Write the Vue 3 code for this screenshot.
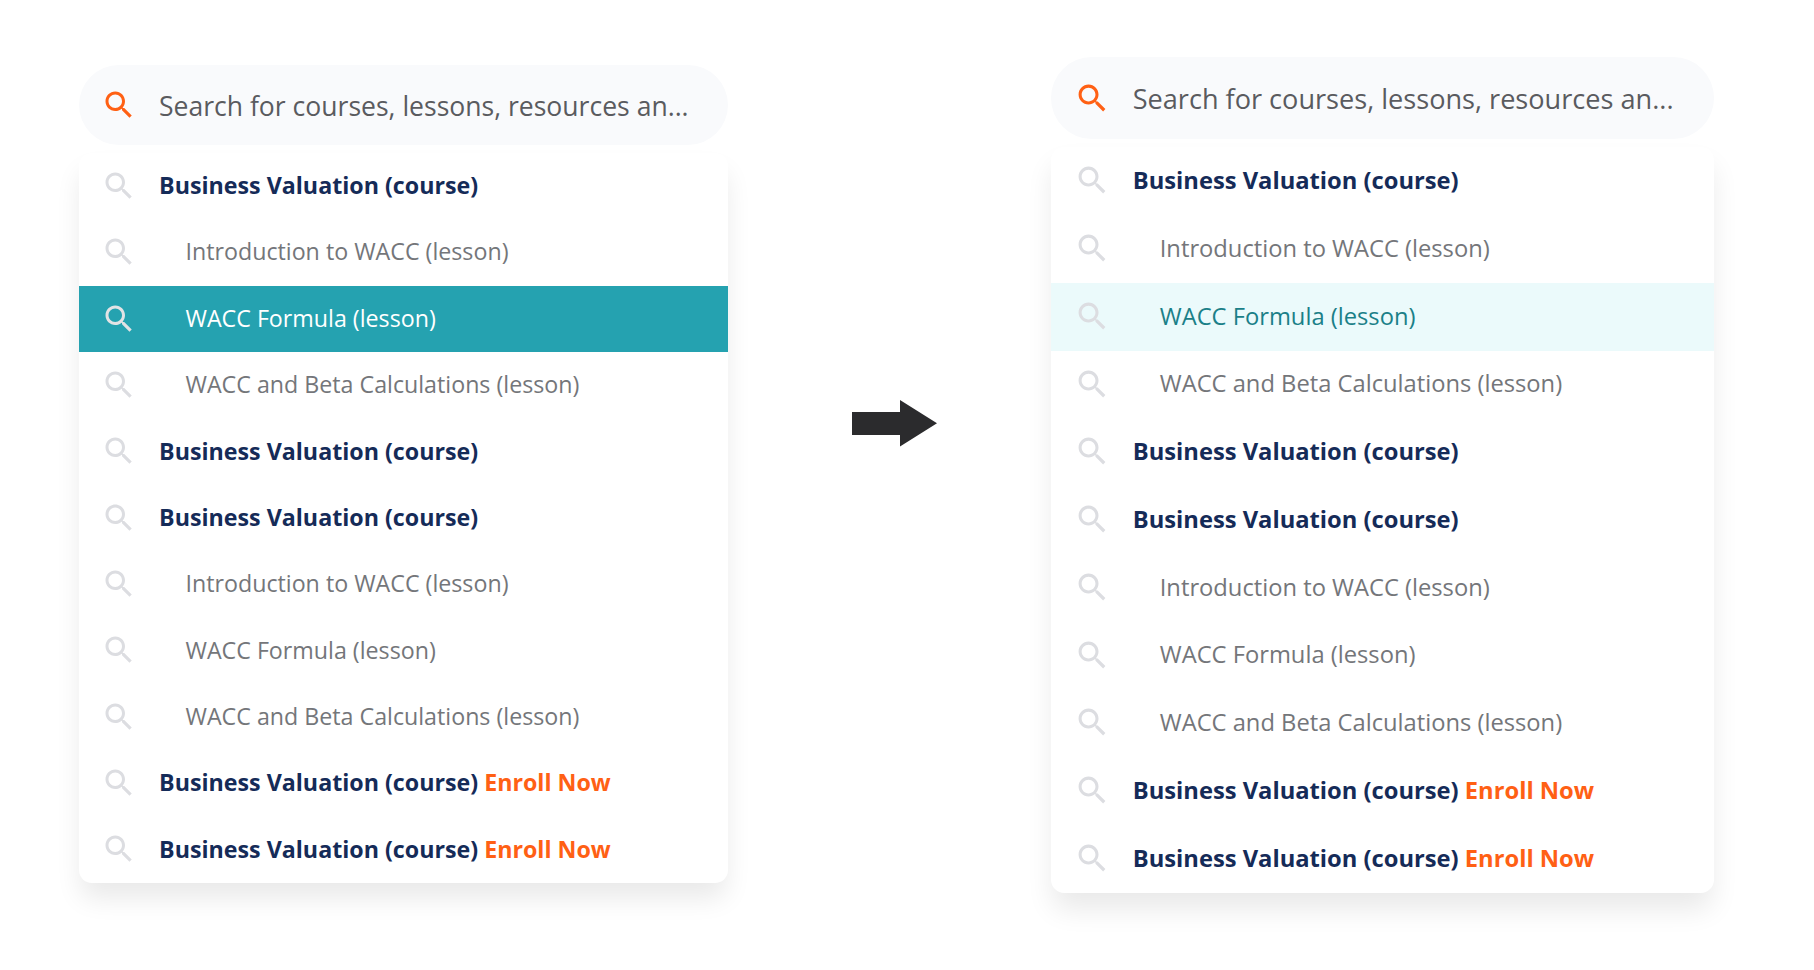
<script setup>
const course = { kind: 'course', text: 'Business Valuation (course)' }
const enroll = { ...course, action: 'Enroll Now' }
const intro = { kind: 'lesson', text: 'Introduction to WACC (lesson)' }
const formula = { kind: 'lesson', text: 'WACC Formula (lesson)' }
const beta = { kind: 'lesson', text: 'WACC and Beta Calculations (lesson)' }

const rows = [
  course, intro, { ...formula, active: true }, beta,
  course, course, intro, formula, beta, enroll, enroll,
]
const variants = ['before', 'after']
const iconPath =
  'M15.5 14h-.79l-.28-.27C15.41 12.59 16 11.11 16 9.5 16 5.91 13.09 3 9.5 3S3 5.91 3 9.5 5.91 16 9.5 16c1.61 0 3.09-.59 4.23-1.57l.27.28v.79l5 4.99L20.49 19l-4.99-5zm-6 0C7.01 14 5 11.99 5 9.5S7.01 5 9.5 5 14 7.01 14 9.5 11.99 14 9.5 14z'
</script>

<template>
  <main class="board">
    <section v-for="v in variants" :key="v" class="search" :class="v">
      <div class="field">
        <svg class="icon" viewBox="0 0 24 24"><path :d="iconPath" /></svg>
        <span class="query">Search for courses, lessons, resources an...</span>
      </div>
      <ul class="results">
        <li v-for="(r, i) in rows" :key="i" class="row" :class="[r.kind, { active: r.active }]">
          <svg class="icon" viewBox="0 0 24 24"><path :d="iconPath" /></svg>
          <span class="label">{{ r.text }} <span v-if="r.action" class="action">{{ r.action }}</span></span>
        </li>
      </ul>
    </section>
    <svg class="arrow" viewBox="0 0 85 47"><path d="M0 12H48V0L85 23.3L48 46.5V35H0Z" /></svg>
  </main>
</template>

<style>
body {
  background: #fff;
}
</style>

<style scoped>
.board {
  display: grid;
  grid-template-columns: 648.7px 1fr 662.7px;
  align-items: start;
  box-sizing: border-box;
  width: 1814px;
  height: 970px;
  padding: 57.3px 100px 0 79.3px;
  overflow: hidden;
  font-family: "Open Sans", "Noto Sans", sans-serif;
}
.search {
  --u: 1px;
  grid-row: 1;
}
.before {
  grid-column: 1;
  margin-top: 7.7px;
}
.after {
  --u: 1.0213px;
  grid-column: 3;
}
.field,
.row {
  display: flex;
  align-items: center;
  box-sizing: border-box;
  padding-left: calc(22 * var(--u));
  white-space: nowrap;
}
.field {
  height: calc(79.6 * var(--u));
  border-radius: calc(40 * var(--u));
  background: #f9fafc;
}
.icon {
  flex: none;
  width: calc(36 * var(--u));
  height: calc(36 * var(--u));
  fill: #dcdde1;
}
.field .icon {
  fill: #ff6014;
}
.query {
  margin-top: 1.6px;
  margin-left: calc(21.7 * var(--u));
  font-size: calc(26.55 * var(--u));
  color: #5a5b5f;
}
.results {
  margin: calc(8.6 * var(--u)) 0 0;
  padding: 0;
  list-style: none;
  border-radius: calc(13 * var(--u));
  background: #fff;
  box-shadow: 0 calc(17 * var(--u)) calc(27 * var(--u)) calc(-2 * var(--u)) rgba(0, 0, 0, 0.09);
}
.row {
  height: calc(66.35 * var(--u));
  padding-bottom: 1px;
  font-size: calc(23.23 * var(--u));
}
.label {
  margin-bottom: 1.4px;
  margin-left: calc(21.8 * var(--u));
}
.course {
  font-weight: 700;
  color: #152b58;
}
.lesson {
  color: #74767a;
}
.lesson .label {
  margin-left: calc(48.2 * var(--u));
}
.action {
  color: #ff6014;
}
.before .active {
  background: #25a2b0;
  color: #fff;
}
.before .active .icon {
  fill: #e2e3e5;
}
.after .active {
  background: #ebfafb;
  color: #1a8088;
}
.arrow {
  grid-column: 2;
  grid-row: 1;
  width: 85px;
  height: 47px;
  margin: 342.3px 0 0 124px;
  fill: #2b2b2d;
}
</style>
